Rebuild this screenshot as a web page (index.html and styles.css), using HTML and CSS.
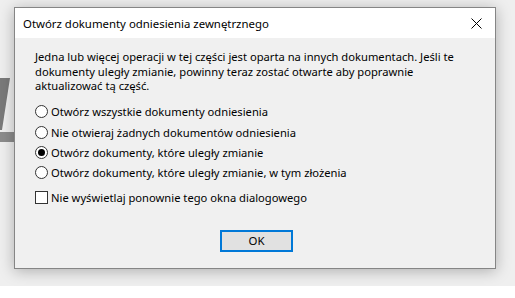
FILE: index.html
```html
<!DOCTYPE html>
<html lang="pl">
  <head>
    <meta charset="UTF-8" />
    <meta name="viewport" content="width=device-width, initial-scale=1.0" />
    <title>Otwórz dokumenty odniesienia zewnętrznego</title>
    <link rel="stylesheet" href="styles.css">
  </head>
  <body>
    <div class="backdrop">
      <!-- part of the app window behind the dialog -->
      <svg class="behind" width="16" height="80" viewBox="0 0 16 80">
        <polygon points="0,12 10,12 2,64 0,64" fill="#7a7a7a" />
        <rect x="0" y="66" width="16" height="10" fill="#8c8c8c" />
      </svg>

      <div class="dialog">
        <div class="titlebar">
          <span class="title">Otwórz dokumenty odniesienia zewnętrznego</span>
          <button class="close" aria-label="Zamknij">
            <svg width="11" height="11" viewBox="0 0 11 11">
              <path d="M0.5 0.5 L10.5 10.5 M10.5 0.5 L0.5 10.5" stroke="#000" stroke-width="1" fill="none" />
            </svg>
          </button>
        </div>

        <div class="content">
          <p class="message">
            Jedna lub więcej operacji w tej części jest oparta na innych dokumentach. Jeśli te<br />
            dokumenty uległy zmianie, powinny teraz zostać otwarte aby poprawnie<br />
            aktualizować tą część.
          </p>

          <div class="options">
            <label class="option">
              <input type="radio" name="open" />
              <span>Otwórz wszystkie dokumenty odniesienia</span>
            </label>
            <label class="option">
              <input type="radio" name="open" />
              <span>Nie otwieraj żadnych dokumentów odniesienia</span>
            </label>
            <label class="option">
              <input type="radio" name="open" checked />
              <span>Otwórz dokumenty, które uległy zmianie</span>
            </label>
            <label class="option">
              <input type="radio" name="open" />
              <span>Otwórz dokumenty, które uległy zmianie, w tym złożenia</span>
            </label>
          </div>

          <label class="option dont-show">
            <input type="checkbox" />
            <span>Nie wyświetlaj ponownie tego okna dialogowego</span>
          </label>

          <div class="actions">
            <button class="button">OK</button>
          </div>
        </div>
      </div>
    </div>
  </body>
</html>
```

FILE: styles.css
```css
* {
  box-sizing: border-box;
  margin: 0;
  padding: 0;
}
body {
  background: #fff;
  font-family: "Noto Sans", "Liberation Sans", sans-serif;
  font-size: 11.2px;
  color: #000;
}
.backdrop {
  position: relative;
  width: 515px;
  height: 286px;
  padding: 7px 0 0 14px;
  background: #efefef;
  overflow: hidden;
}
.behind {
  position: absolute;
  left: 0;
  top: 66px;
}
.dialog {
  position: relative;
  width: 482px;
  height: 262px;
  border: 1px solid #858585;
  background: #f0f0f0;
  box-shadow: 0 2px 14px rgba(0, 0, 0, 0.28);
  display: flex;
  flex-direction: column;
}
.titlebar {
  height: 30px;
  background: #fff;
  display: flex;
  align-items: center;
  justify-content: space-between;
  padding-left: 8px;
}
.title {
  font-size: 11.4px;
}
.close {
  width: 30px;
  height: 30px;
  border: none;
  background: none;
  display: flex;
  align-items: center;
  justify-content: center;
  margin-right: 4px;
}
.content {
  padding: 12px 20px 0 20px;
}
.message {
  line-height: 14.5px;
  white-space: nowrap;
}
.options {
  margin-top: 10px;
  display: flex;
  flex-direction: column;
  gap: 3.8px;
}
.option {
  display: flex;
  align-items: center;
  gap: 3px;
  height: 16.5px;
  white-space: nowrap;
}
.option input {
  appearance: none;
  width: 13px;
  height: 13px;
  border: 1px solid #333;
  background: #fff;
  margin: 0;
  flex: none;
}
.option input[type="radio"] {
  border-radius: 50%;
  display: flex;
  align-items: center;
  justify-content: center;
}
.option input[type="radio"]:checked::before {
  content: "";
  width: 7px;
  height: 7px;
  border-radius: 50%;
  background: #000;
}
.dont-show {
  margin-top: 8.5px;
}
.actions {
  display: flex;
  justify-content: center;
  margin-top: 24px;
  padding-left: 3px;
}
.button {
  width: 73px;
  height: 22px;
  background: #e1e1e1;
  border: 2px solid #0078d7;
  font-family: inherit;
  font-size: 11.4px;
  color: #000;
}
```
